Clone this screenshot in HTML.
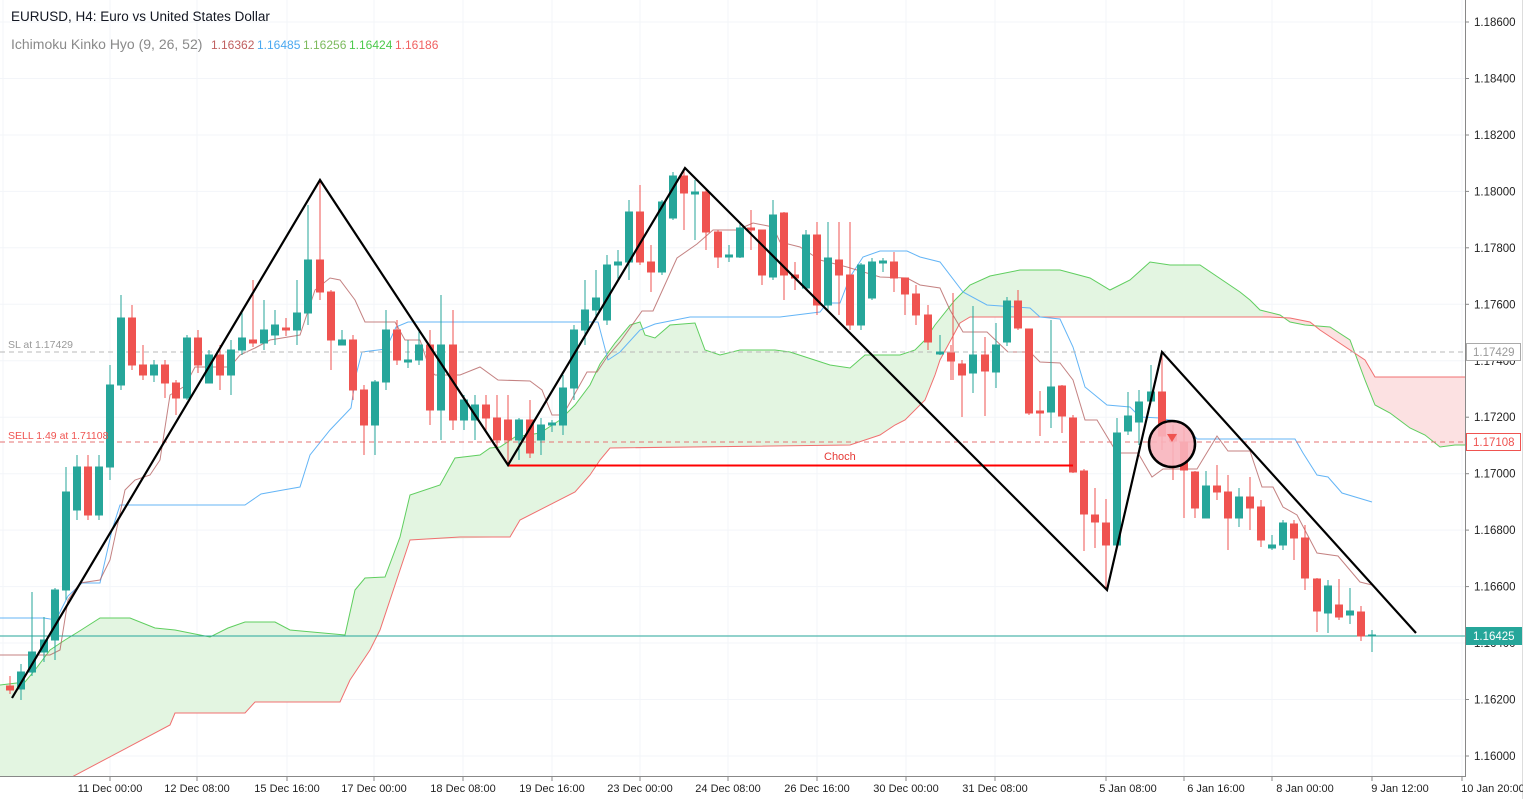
<!DOCTYPE html>
<html><head><meta charset="utf-8"><style>
html,body{margin:0;padding:0;background:#fff;overflow:hidden}
body{width:1523px;height:799px;position:relative;font-family:"Liberation Sans",sans-serif}
svg{position:absolute;left:0;top:0}
.t{font-family:"Liberation Sans",sans-serif}
</style></head><body>
<svg width="1523" height="799" viewBox="0 0 1523 799">
<defs>
<clipPath id="cg"><rect x="0" y="0" width="1263" height="778"/></clipPath>
<clipPath id="cr"><rect x="1263" y="0" width="202" height="778"/></clipPath>
<clipPath id="ch"><rect x="0" y="0" width="1465" height="776"/></clipPath>
</defs>
<g stroke="#f3f5f9" stroke-width="1">
<line x1="0" y1="22" x2="1465" y2="22"/><line x1="0" y1="78.5" x2="1465" y2="78.5"/><line x1="0" y1="135" x2="1465" y2="135"/><line x1="0" y1="191.4" x2="1465" y2="191.4"/><line x1="0" y1="247.8" x2="1465" y2="247.8"/><line x1="0" y1="304.3" x2="1465" y2="304.3"/><line x1="0" y1="360.8" x2="1465" y2="360.8"/><line x1="0" y1="417.2" x2="1465" y2="417.2"/><line x1="0" y1="473.7" x2="1465" y2="473.7"/><line x1="0" y1="530.1" x2="1465" y2="530.1"/><line x1="0" y1="586.6" x2="1465" y2="586.6"/><line x1="0" y1="643" x2="1465" y2="643"/><line x1="0" y1="699.5" x2="1465" y2="699.5"/><line x1="0" y1="756" x2="1465" y2="756"/>
<line x1="110" y1="0" x2="110" y2="776"/><line x1="197" y1="0" x2="197" y2="776"/><line x1="287" y1="0" x2="287" y2="776"/><line x1="374" y1="0" x2="374" y2="776"/><line x1="463" y1="0" x2="463" y2="776"/><line x1="552" y1="0" x2="552" y2="776"/><line x1="640" y1="0" x2="640" y2="776"/><line x1="728" y1="0" x2="728" y2="776"/><line x1="817" y1="0" x2="817" y2="776"/><line x1="906" y1="0" x2="906" y2="776"/><line x1="995" y1="0" x2="995" y2="776"/><line x1="1106" y1="0" x2="1106" y2="776"/><line x1="1184" y1="0" x2="1184" y2="776"/><line x1="1272" y1="0" x2="1272" y2="776"/><line x1="1372" y1="0" x2="1372" y2="776"/><line x1="1462" y1="0" x2="1462" y2="776"/>
<line x1="3" y1="0" x2="3" y2="776"/>
</g>
<g clip-path="url(#ch)">
<path clip-path="url(#cg)" fill="#e3f5e1" d="M0,685 L25,682 35,670 50,650 65,640 78,632 100,618 130,618 155,628 175,630 210,637 228,628 245,622 275,622 290,630 345,635 355,590 365,578 385,577 400,537 410,495 440,485 455,458 480,455 490,448 500,447 515,437 540,433 560,420 575,405 590,385 600,364 615,343 630,325 640,322 645,335 655,338 670,325 695,323 705,350 720,355 740,350 775,350 790,352 830,365 850,368 865,355 900,355 915,350 925,340 935,325 955,300 970,285 990,276 1020,270 1060,270 1090,278 1110,290 1130,280 1150,262 1170,265 1200,265 1240,292 1250,300 1260,310 1280,315 1290,322 1305,325 1330,327 1350,340 1365,380 1375,405 1390,413 1410,428 1425,435 1440,447 1455,445 1465,445 L1465,377 1375,377 1365,360 1320,330 1310,322 1290,318 1270,317 970,317 960,323 940,360 935,375 925,400 905,420 895,425 880,435 850,445 610,448 600,460 590,475 575,492 520,520 510,537 410,540 400,570 380,630 370,650 360,665 350,680 340,702 255,702 245,713 175,713 170,725 70,778 0,778 Z"/>
<path clip-path="url(#cr)" fill="#fce1e2" d="M1240,292 L1250,300 1260,310 1280,315 1290,322 1305,325 1330,327 1350,340 1365,380 1375,405 1390,413 1410,428 1425,435 1440,447 1455,445 1465,445 L1465,377 1375,377 1365,360 1320,330 1310,322 1290,318 1240,317 Z"/>
<polyline fill="none" stroke="#5fce5f" stroke-width="1" points="0,685 25,682 35,670 50,650 65,640 78,632 100,618 130,618 155,628 175,630 210,637 228,628 245,622 275,622 290,630 345,635 355,590 365,578 385,577 400,537 410,495 440,485 455,458 480,455 490,448 500,447 515,437 540,433 560,420 575,405 590,385 600,364 615,343 630,325 640,322 645,335 655,338 670,325 695,323 705,350 720,355 740,350 775,350 790,352 830,365 850,368 865,355 900,355 915,350 925,340 935,325 955,300 970,285 990,276 1020,270 1060,270 1090,278 1110,290 1130,280 1150,262 1170,265 1200,265 1240,292 1250,300 1260,310 1280,315 1290,322 1305,325 1330,327 1350,340 1365,380 1375,405 1390,413 1410,428 1425,435 1440,447 1455,445 1465,445"/>
<polyline fill="none" stroke="#f07070" stroke-width="1" points="70,778 170,725 175,713 245,713 255,702 340,702 350,680 360,665 370,650 380,630 400,570 410,540 460,537 510,537 520,520 575,492 590,475 600,460 610,448 850,445 880,435 895,425 905,420 925,400 935,375 940,360 960,323 970,317 1270,317 1290,318 1310,322 1320,330 1365,360 1375,377 1465,377"/>
<polyline fill="none" stroke="#64b5f6" stroke-width="1" points="0,618 44,618 56,620 68,596 82,583 100,583 112,530 120,505 245,505 261,494 283,490 300,487 310,455 330,430 351,408 356,375 362,352 386,349 396,327 408,322 598,322 608,360 620,352 640,330 655,324 690,317 780,317 820,312 827,303 840,303 850,277 863,257 880,251 907,251 920,257 940,262 963,292 987,305 1030,308 1040,317 1060,319 1073,347 1085,387 1107,405 1130,407 1140,417 1160,418 1183,423 1197,439 1295,439 1303,453 1317,475 1328,477 1342,493 1372,502"/>
<polyline fill="none" stroke="#b05858" stroke-opacity="0.75" stroke-width="1" points="0,655 50,655 60,650 68,600 80,583 100,580 110,560 125,490 135,480 150,475 160,460 170,395 185,386 195,367 230,367 240,355 255,348 270,340 300,335 305,320 315,290 330,278 340,280 355,300 365,322 395,322 405,340 420,340 430,370 435,375 460,375 480,367 498,380 530,381 542,390 552,415 563,415 587,372 597,372 607,357 620,342 642,311 653,311 677,258 697,244 713,230 737,230 753,223 773,227 780,242 800,247 820,260 847,267 880,277 907,278 920,285 940,288 950,310 963,332 987,332 1008,352 1030,352 1040,362 1060,363 1073,380 1085,420 1097,420 1117,453 1138,453 1152,477 1163,469 1197,469 1217,436 1228,451 1250,451 1262,487 1273,487 1283,507 1297,515 1317,553 1338,556 1360,582 1372,585"/>
<line x1="0" y1="352" x2="1465" y2="352" stroke="#b8b8b8" stroke-dasharray="5,4"/>
<line x1="0" y1="442" x2="1465" y2="442" stroke="#e57373" stroke-dasharray="5,4"/>
<line x1="0" y1="636" x2="1465" y2="636" stroke="#26a69a" stroke-width="1"/>
<g stroke="#ef5350" fill="#ef5350">
<path d="M10,676V694M88,455V520M132,305V370M143,345V380M165,360V398M176,380V415M198,330V373M220,345V390M253,280V347M286,318V336M320,180V300M331,290V370M353,335V400M364,385V455M397,320V365M430,330V425M453,310V430M486,395V430M497,395V450M508,395V465M530,400V458M640,185V265M651,245V292M684,170V230M706,190V250M718,230V268M751,210V250M762,230V285M784,212V300M795,262V290M817,222V315M839,222V315M850,222V330M894,252V292M905,282V315M916,285V325M928,305V350M951,345V380M953,293V380M962,360V417M985,337V416M1018,290V330M1029,329V415M1040,391V436M1062,385V433M1073,415V473M1084,469V551M1095,488V548M1106,499V590M1162,352V450M1173,425V480M1184,427V518M1195,471V518M1217,465V500M1228,475V550M1250,477V530M1261,500V547M1294,520V560M1305,525V590M1317,578V632M1339,579V620M1361,606V641" fill="none"/>
<rect x="6.5" y="686" width="7" height="4"/><rect x="84.5" y="467" width="7" height="48"/><rect x="128.5" y="318" width="7" height="47"/><rect x="139.5" y="365" width="7" height="10"/><rect x="161.5" y="365" width="7" height="18"/><rect x="172.5" y="383" width="7" height="15"/><rect x="194.5" y="338" width="7" height="27"/><rect x="216.5" y="355" width="7" height="20"/><rect x="249.5" y="340" width="7" height="3"/><rect x="282.5" y="328" width="7" height="2"/><rect x="316.5" y="260" width="7" height="32"/><rect x="327.5" y="292" width="7" height="48"/><rect x="349.5" y="340" width="7" height="50"/><rect x="360.5" y="390" width="7" height="35"/><rect x="393.5" y="330" width="7" height="30"/><rect x="426.5" y="345" width="7" height="65"/><rect x="449.5" y="345" width="7" height="75"/><rect x="482.5" y="405" width="7" height="13"/><rect x="493.5" y="418" width="7" height="22"/><rect x="504.5" y="420" width="7" height="20"/><rect x="526.5" y="420" width="7" height="33"/><rect x="636.5" y="212" width="7" height="50"/><rect x="647.5" y="262" width="7" height="10"/><rect x="680.5" y="176" width="7" height="17"/><rect x="702.5" y="192" width="7" height="40"/><rect x="714.5" y="232" width="7" height="25"/><rect x="747.5" y="228" width="7" height="2"/><rect x="758.5" y="230" width="7" height="45"/><rect x="780.5" y="213" width="7" height="62"/><rect x="791.5" y="275" width="7" height="3"/><rect x="813.5" y="235" width="7" height="70"/><rect x="835.5" y="260" width="7" height="15"/><rect x="846.5" y="275" width="7" height="50"/><rect x="890.5" y="262" width="7" height="16"/><rect x="901.5" y="278" width="7" height="16"/><rect x="912.5" y="294" width="7" height="21"/><rect x="924.5" y="315" width="7" height="27"/><rect x="947.5" y="353" width="7" height="8"/><rect x="958.5" y="364" width="7" height="11"/><rect x="981.5" y="355" width="7" height="16"/><rect x="1014.5" y="301" width="7" height="27"/><rect x="1025.5" y="329" width="7" height="84"/><rect x="1036.5" y="411" width="7" height="2"/><rect x="1058.5" y="386" width="7" height="30"/><rect x="1069.5" y="418" width="7" height="54"/><rect x="1080.5" y="471" width="7" height="43"/><rect x="1091.5" y="515" width="7" height="7"/><rect x="1102.5" y="523" width="7" height="22"/><rect x="1158.5" y="392" width="7" height="44"/><rect x="1169.5" y="434" width="7" height="7"/><rect x="1180.5" y="442" width="7" height="28"/><rect x="1191.5" y="472" width="7" height="36"/><rect x="1213.5" y="486" width="7" height="6"/><rect x="1224.5" y="492" width="7" height="26"/><rect x="1246.5" y="497" width="7" height="11"/><rect x="1257.5" y="507" width="7" height="33"/><rect x="1290.5" y="524" width="7" height="14"/><rect x="1301.5" y="538" width="7" height="40"/><rect x="1313.5" y="579" width="7" height="32"/><rect x="1335.5" y="605" width="7" height="12"/><rect x="1357.5" y="612" width="7" height="24"/>
</g>
<g stroke="#26a69a" fill="#26a69a">
<path d="M21,664V700M32,592V676M44,617V662M55,588V660M66,467V600M77,455V520M99,455V520M110,365V480M121,295V390M154,360V382M187,335V400M209,350V383M231,340V395M242,310V355M264,300V350M275,310V345M297,280V345M308,205V325M342,330V345M375,380V455M386,310V390M408,340V368M419,330V365M441,295V440M464,395V430M475,395V440M519,418V460M541,418V455M552,420V432M563,375V435M574,325V400M585,280V345M596,270V320M607,255V325M618,250V280M629,200V280M662,200V275M673,172V220M695,180V240M729,245V262M740,222V258M773,200V280M806,230V290M828,222V310M861,263V330M872,258V300M883,258V272M940,335V355M973,306V393M996,323V388M1007,297V346M1051,320V428M1117,418V545M1128,392V435M1139,390V445M1151,365V400M1206,471V518M1239,488V527M1272,535V550M1283,520V550M1328,580V633M1350,588V624M1372,630V652" fill="none"/>
<rect x="17.5" y="672" width="7" height="17"/><rect x="28.5" y="652" width="7" height="20"/><rect x="40.5" y="640" width="7" height="12"/><rect x="51.5" y="590" width="7" height="50"/><rect x="62.5" y="492" width="7" height="98"/><rect x="73.5" y="467" width="7" height="43"/><rect x="95.5" y="467" width="7" height="48"/><rect x="106.5" y="385" width="7" height="82"/><rect x="117.5" y="318" width="7" height="67"/><rect x="150.5" y="365" width="7" height="10"/><rect x="183.5" y="338" width="7" height="60"/><rect x="205.5" y="355" width="7" height="28"/><rect x="227.5" y="350" width="7" height="25"/><rect x="238.5" y="338" width="7" height="12"/><rect x="260.5" y="330" width="7" height="13"/><rect x="271.5" y="325" width="7" height="10"/><rect x="293.5" y="313" width="7" height="17"/><rect x="304.5" y="260" width="7" height="53"/><rect x="338.5" y="340" width="7" height="5"/><rect x="371.5" y="382" width="7" height="43"/><rect x="382.5" y="330" width="7" height="52"/><rect x="404.5" y="360" width="7" height="2"/><rect x="415.5" y="345" width="7" height="15"/><rect x="437.5" y="345" width="7" height="65"/><rect x="460.5" y="400" width="7" height="20"/><rect x="471.5" y="405" width="7" height="15"/><rect x="515.5" y="420" width="7" height="20"/><rect x="537.5" y="425" width="7" height="15"/><rect x="548.5" y="423" width="7" height="2"/><rect x="559.5" y="388" width="7" height="37"/><rect x="570.5" y="330" width="7" height="58"/><rect x="581.5" y="310" width="7" height="20"/><rect x="592.5" y="298" width="7" height="12"/><rect x="603.5" y="265" width="7" height="55"/><rect x="614.5" y="262" width="7" height="3"/><rect x="625.5" y="212" width="7" height="50"/><rect x="658.5" y="202" width="7" height="70"/><rect x="669.5" y="176" width="7" height="42"/><rect x="691.5" y="192" width="7" height="2"/><rect x="725.5" y="255" width="7" height="2"/><rect x="736.5" y="228" width="7" height="29"/><rect x="769.5" y="215" width="7" height="62"/><rect x="802.5" y="235" width="7" height="53"/><rect x="824.5" y="258" width="7" height="47"/><rect x="857.5" y="265" width="7" height="60"/><rect x="868.5" y="262" width="7" height="36"/><rect x="879.5" y="261" width="7" height="2"/><rect x="936.5" y="352" width="7" height="2"/><rect x="969.5" y="355" width="7" height="18"/><rect x="992.5" y="345" width="7" height="27"/><rect x="1003.5" y="301" width="7" height="41"/><rect x="1047.5" y="387" width="7" height="25"/><rect x="1113.5" y="433" width="7" height="112"/><rect x="1124.5" y="416" width="7" height="15"/><rect x="1135.5" y="402" width="7" height="20"/><rect x="1147.5" y="392" width="7" height="9"/><rect x="1202.5" y="486" width="7" height="32"/><rect x="1235.5" y="497" width="7" height="21"/><rect x="1268.5" y="545" width="7" height="3"/><rect x="1279.5" y="523" width="7" height="22"/><rect x="1324.5" y="586" width="7" height="27"/><rect x="1346.5" y="611" width="7" height="4"/><rect x="1368.5" y="635" width="7" height="1"/>
</g>
<line x1="508" y1="465.5" x2="1073" y2="465.5" stroke="#f00" stroke-width="2"/>
<text x="824" y="460" class="t" font-size="11" fill="#e53935">Choch</text>
<polyline fill="none" stroke="#000" stroke-width="2.2" points="12,698 320,180 508,465 685,168 1107,590 1162,352 1416,633"/>
<circle cx="1172" cy="444" r="23" fill="#f8b4bd" fill-opacity="0.9" stroke="#000" stroke-width="2.5"/>
<path d="M1167,434 L1177,434 1172,442 Z" fill="#ef5350"/>
<text x="8" y="348" class="t" font-size="10.5" fill="#999">SL at 1.17429</text>
<text x="8" y="439" class="t" font-size="10.5" fill="#ef5350">SELL 1.49 at 1.71108</text>
</g>
<rect x="1465.5" y="0" width="58" height="799" fill="#fff"/>
<rect x="0" y="776.5" width="1465" height="23" fill="#fff"/>
<line x1="1465.5" y1="0" x2="1465.5" y2="777" stroke="#888"/>
<line x1="0" y1="776.5" x2="1466" y2="776.5" stroke="#888"/>
<line x1="1522.5" y1="0" x2="1522.5" y2="799" stroke="#ddd"/>
<g class="t" font-size="11.5" fill="#222">
<text x="1474" y="26">1.18600</text><text x="1474" y="82.5">1.18400</text><text x="1474" y="139">1.18200</text><text x="1474" y="195.4">1.18000</text><text x="1474" y="251.8">1.17800</text><text x="1474" y="308.3">1.17600</text><text x="1474" y="364.8">1.17400</text><text x="1474" y="421.2">1.17200</text><text x="1474" y="477.7">1.17000</text><text x="1474" y="534.1">1.16800</text><text x="1474" y="590.6">1.16600</text><text x="1474" y="647">1.16400</text><text x="1474" y="703.5">1.16200</text><text x="1474" y="760">1.16000</text>
</g>
<g stroke="#888"><line x1="1465" y1="22" x2="1469" y2="22"/><line x1="1465" y1="78.5" x2="1469" y2="78.5"/><line x1="1465" y1="135" x2="1469" y2="135"/><line x1="1465" y1="191.4" x2="1469" y2="191.4"/><line x1="1465" y1="247.8" x2="1469" y2="247.8"/><line x1="1465" y1="304.3" x2="1469" y2="304.3"/><line x1="1465" y1="417.2" x2="1469" y2="417.2"/><line x1="1465" y1="473.7" x2="1469" y2="473.7"/><line x1="1465" y1="530.1" x2="1469" y2="530.1"/><line x1="1465" y1="586.6" x2="1469" y2="586.6"/><line x1="1465" y1="699.5" x2="1469" y2="699.5"/><line x1="1465" y1="756" x2="1469" y2="756"/></g>
<rect x="1466.5" y="343.5" width="54" height="17" fill="#fff" stroke="#aaa"/>
<text x="1473" y="356" class="t" font-size="11.5" fill="#999">1.17429</text>
<rect x="1466.5" y="433.5" width="54" height="17" fill="#fff" stroke="#ef5350"/>
<text x="1473" y="446" class="t" font-size="11.5" fill="#ef5350">1.17108</text>
<rect x="1466" y="627" width="56" height="18" fill="#26a69a"/>
<text x="1473" y="640" class="t" font-size="11.5" fill="#fff">1.16425</text>
<g class="t" font-size="11" fill="#222" text-anchor="middle">
<text x="110" y="792">11 Dec 00:00</text><text x="197" y="792">12 Dec 08:00</text><text x="287" y="792">15 Dec 16:00</text><text x="374" y="792">17 Dec 00:00</text><text x="463" y="792">18 Dec 08:00</text><text x="552" y="792">19 Dec 16:00</text><text x="640" y="792">23 Dec 00:00</text><text x="728" y="792">24 Dec 08:00</text><text x="817" y="792">26 Dec 16:00</text><text x="906" y="792">30 Dec 00:00</text><text x="995" y="792">31 Dec 08:00</text><text x="1128" y="792">5 Jan 08:00</text><text x="1216" y="792">6 Jan 16:00</text><text x="1305" y="792">8 Jan 00:00</text><text x="1400" y="792">9 Jan 12:00</text><text x="1493" y="792">10 Jan 20:00</text>
</g>
<g stroke="#888"><line x1="110" y1="777" x2="110" y2="781"/><line x1="197" y1="777" x2="197" y2="781"/><line x1="287" y1="777" x2="287" y2="781"/><line x1="374" y1="777" x2="374" y2="781"/><line x1="463" y1="777" x2="463" y2="781"/><line x1="552" y1="777" x2="552" y2="781"/><line x1="640" y1="777" x2="640" y2="781"/><line x1="728" y1="777" x2="728" y2="781"/><line x1="817" y1="777" x2="817" y2="781"/><line x1="906" y1="777" x2="906" y2="781"/><line x1="995" y1="777" x2="995" y2="781"/><line x1="1106" y1="777" x2="1106" y2="781"/><line x1="1184" y1="777" x2="1184" y2="781"/><line x1="1272" y1="777" x2="1272" y2="781"/><line x1="1372" y1="777" x2="1372" y2="781"/><line x1="1462" y1="777" x2="1462" y2="781"/></g>
<text x="11" y="21" class="t" font-size="13.5" fill="#131722">EURUSD, H4: Euro vs United States Dollar</text>
<text x="11" y="49" class="t" font-size="14" fill="#8a8a8a">Ichimoku Kinko Hyo (9, 26, 52)</text>
<text x="211" y="49" class="t" font-size="12" fill="#c06060">1.16362</text>
<text x="257" y="49" class="t" font-size="12" fill="#4aa8f0">1.16485</text>
<text x="303" y="49" class="t" font-size="12" fill="#7cba5c">1.16256</text>
<text x="349" y="49" class="t" font-size="12" fill="#4cc94c">1.16424</text>
<text x="395" y="49" class="t" font-size="12" fill="#f06060">1.16186</text>
</svg>
</body></html>
